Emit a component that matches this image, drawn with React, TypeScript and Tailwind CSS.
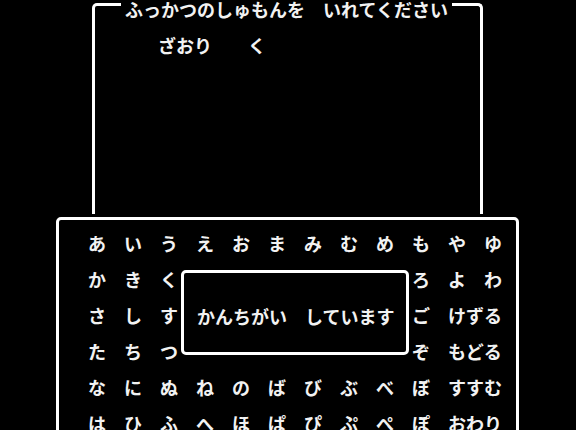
const rows: string[][] = [
  ["あ", "い", "う", "え", "お", "ま", "み", "む", "め", "も", "や", "ゆ"],
  ["か", "き", "く", "", "", "", "", "", "", "ろ", "よ", "わ"],
  ["さ", "し", "す", "", "", "", "", "", "", "ご", "けずる"],
  ["た", "ち", "つ", "", "", "", "", "", "", "ぞ", "もどる"],
  ["な", "に", "ぬ", "ね", "の", "ば", "び", "ぶ", "べ", "ぼ", "すすむ"],
  ["は", "ひ", "ふ", "へ", "ほ", "ぱ", "ぴ", "ぷ", "ぺ", "ぽ", "おわり"],
];

export default function App() {
  return (
    <div
      className="h-[430px] w-[576px] overflow-hidden bg-black text-[18px] font-bold leading-[18px] text-[#f2f2f2]"
      style={{ fontFamily: '"Noto Sans CJK JP", "Noto Sans", sans-serif' }}
    >
      {/* password entry window */}
      <div className="relative ml-[92px] mt-[3px] h-[211px] w-[391px] rounded-t-[5px] border-[3px] border-b-0 border-white">
        <div className="absolute left-[26px] top-[-6px] bg-black px-[4px] whitespace-pre">
          ふっかつのしゅもんを　いれてください
        </div>
        <div className="whitespace-pre pl-[63px] pt-[30px]">ざおり　　く</div>
      </div>

      {/* kana board */}
      <div className="relative ml-[56px] mt-[3px] h-[260px] w-[463px] rounded-[5px] border-[3px] border-white pl-[20px] pt-[5px]">
        <div className="grid grid-cols-[repeat(12,36px)] auto-rows-[36px]">
          {rows.map((row, r) =>
            row.map((ch, c) =>
              ch.length > 1 ? (
                <div key={`${r}-${c}`} className="col-span-2 flex items-center whitespace-pre pl-[9px]">
                  {ch}
                </div>
              ) : (
                <div key={`${r}-${c}`} className="flex items-center justify-center">
                  {ch}
                </div>
              )
            )
          )}
        </div>

        {/* error message */}
        <div className="absolute left-[122px] top-[50px] h-[85px] w-[228px] rounded-[5px] border-[3px] border-white bg-black pl-[13px] pt-[34px] whitespace-pre">
          かんちがい　しています
        </div>
      </div>
    </div>
  );
}
